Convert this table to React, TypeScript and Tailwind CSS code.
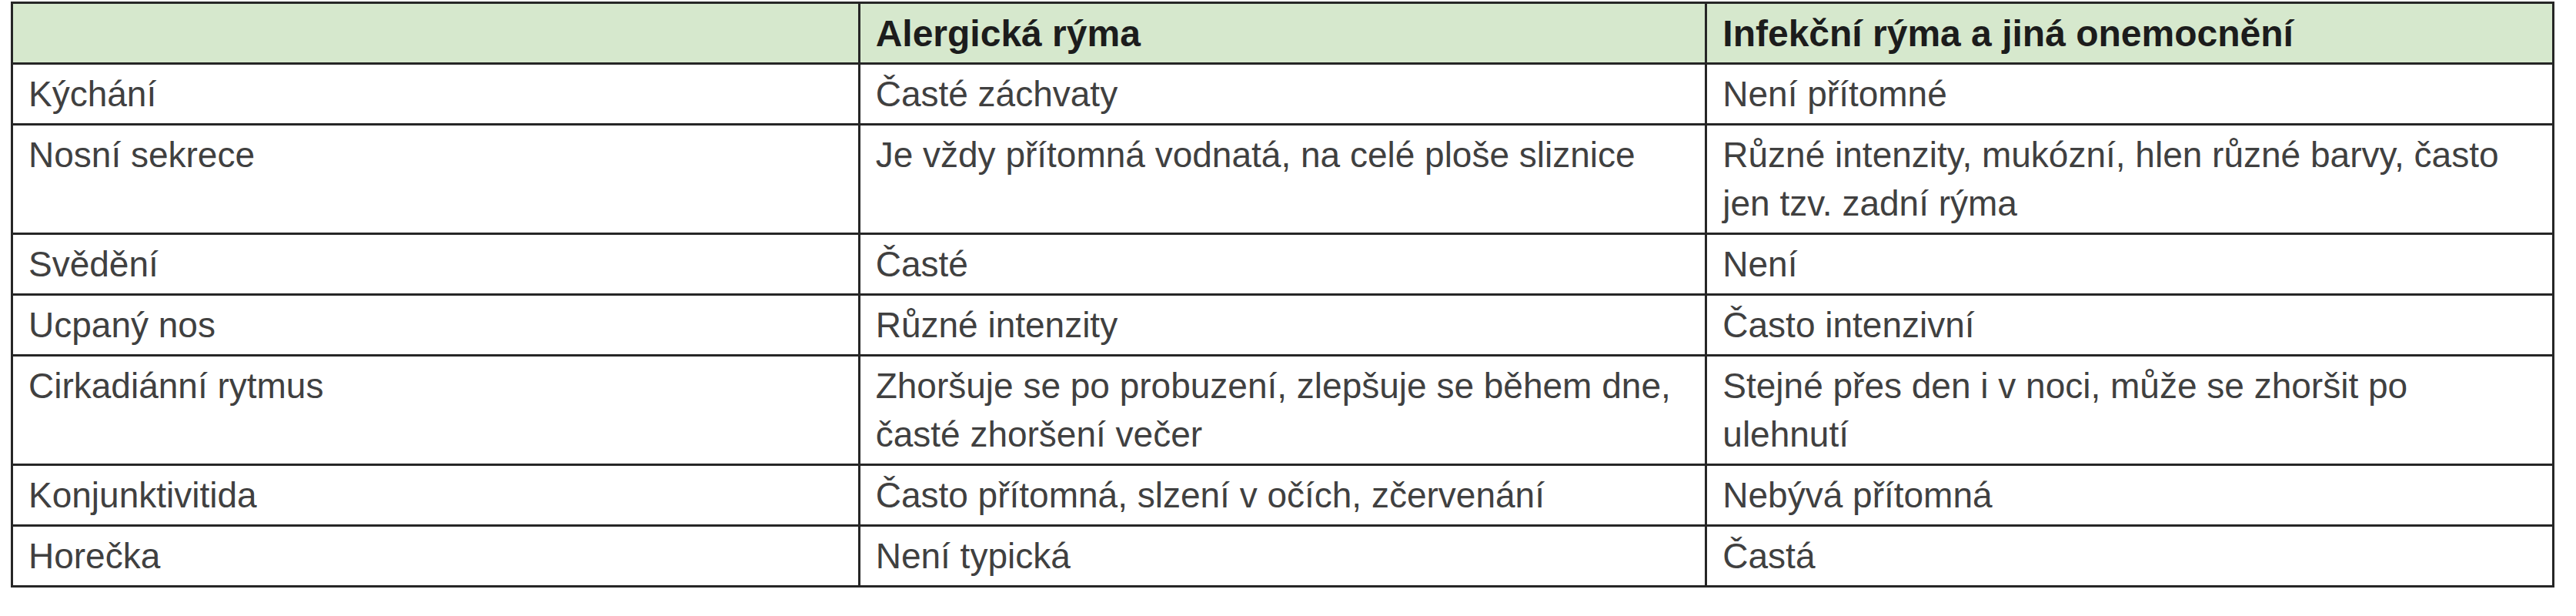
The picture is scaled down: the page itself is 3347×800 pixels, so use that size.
import React from 'react';

type Row = { label: string; allergic: React.ReactNode; infectious: React.ReactNode };

const ROWS: Row[] = [
  { label: 'Kýchání', allergic: 'Časté záchvaty', infectious: 'Není přítomné' },
  {
    label: 'Nosní sekrece',
    allergic: 'Je vždy přítomná vodnatá, na celé ploše sliznice',
    infectious: (
      <>
        Různé intenzity, mukózní, hlen různé barvy, často
        <br />
        jen tzv. zadní rýma
      </>
    ),
  },
  { label: 'Svědění', allergic: 'Časté', infectious: 'Není' },
  { label: 'Ucpaný nos', allergic: 'Různé intenzity', infectious: 'Často intenzivní' },
  {
    label: 'Cirkadiánní rytmus',
    allergic: (
      <>
        Zhoršuje se po probuzení, zlepšuje se během dne,
        <br />
        časté zhoršení večer
      </>
    ),
    infectious: (
      <>
        Stejné přes den i v noci, může se zhoršit po
        <br />
        ulehnutí
      </>
    ),
  },
  { label: 'Konjunktivitida', allergic: 'Často přítomná, slzení v očích, zčervenání', infectious: 'Nebývá přítomná' },
  { label: 'Horečka', allergic: 'Není typická', infectious: 'Častá' },
];

const cell = 'border-[3px] border-[#262626] pl-5 pr-4 pt-[7px] pb-[6px] align-top whitespace-nowrap';

const App: React.FC = () => {
  return (
    <div className="w-[3347px] h-[800px] bg-white font-['Liberation_Sans',Arial,sans-serif] text-[46px] leading-[63px] text-[#404040]">
      <table className="ml-[14px] mt-[2px] w-[3305px] table-fixed border-collapse">
        <thead>
          <tr className="bg-[#d6e8cd]">
            <th className={`${cell} w-1/3 text-left`}></th>
            <th className={`${cell} w-1/3 text-left text-[48px] font-bold text-[#1c1c1c]`}>Alergická rýma</th>
            <th className={`${cell} w-1/3 text-left text-[48px] font-bold text-[#1c1c1c]`}>Infekční rýma a jiná onemocnění</th>
          </tr>
        </thead>
        <tbody>
          {ROWS.map(row => (
            <tr key={row.label}>
              <td className={cell}>{row.label}</td>
              <td className={cell}>{row.allergic}</td>
              <td className={cell}>{row.infectious}</td>
            </tr>
          ))}
        </tbody>
      </table>
    </div>
  );
};

export default App;
